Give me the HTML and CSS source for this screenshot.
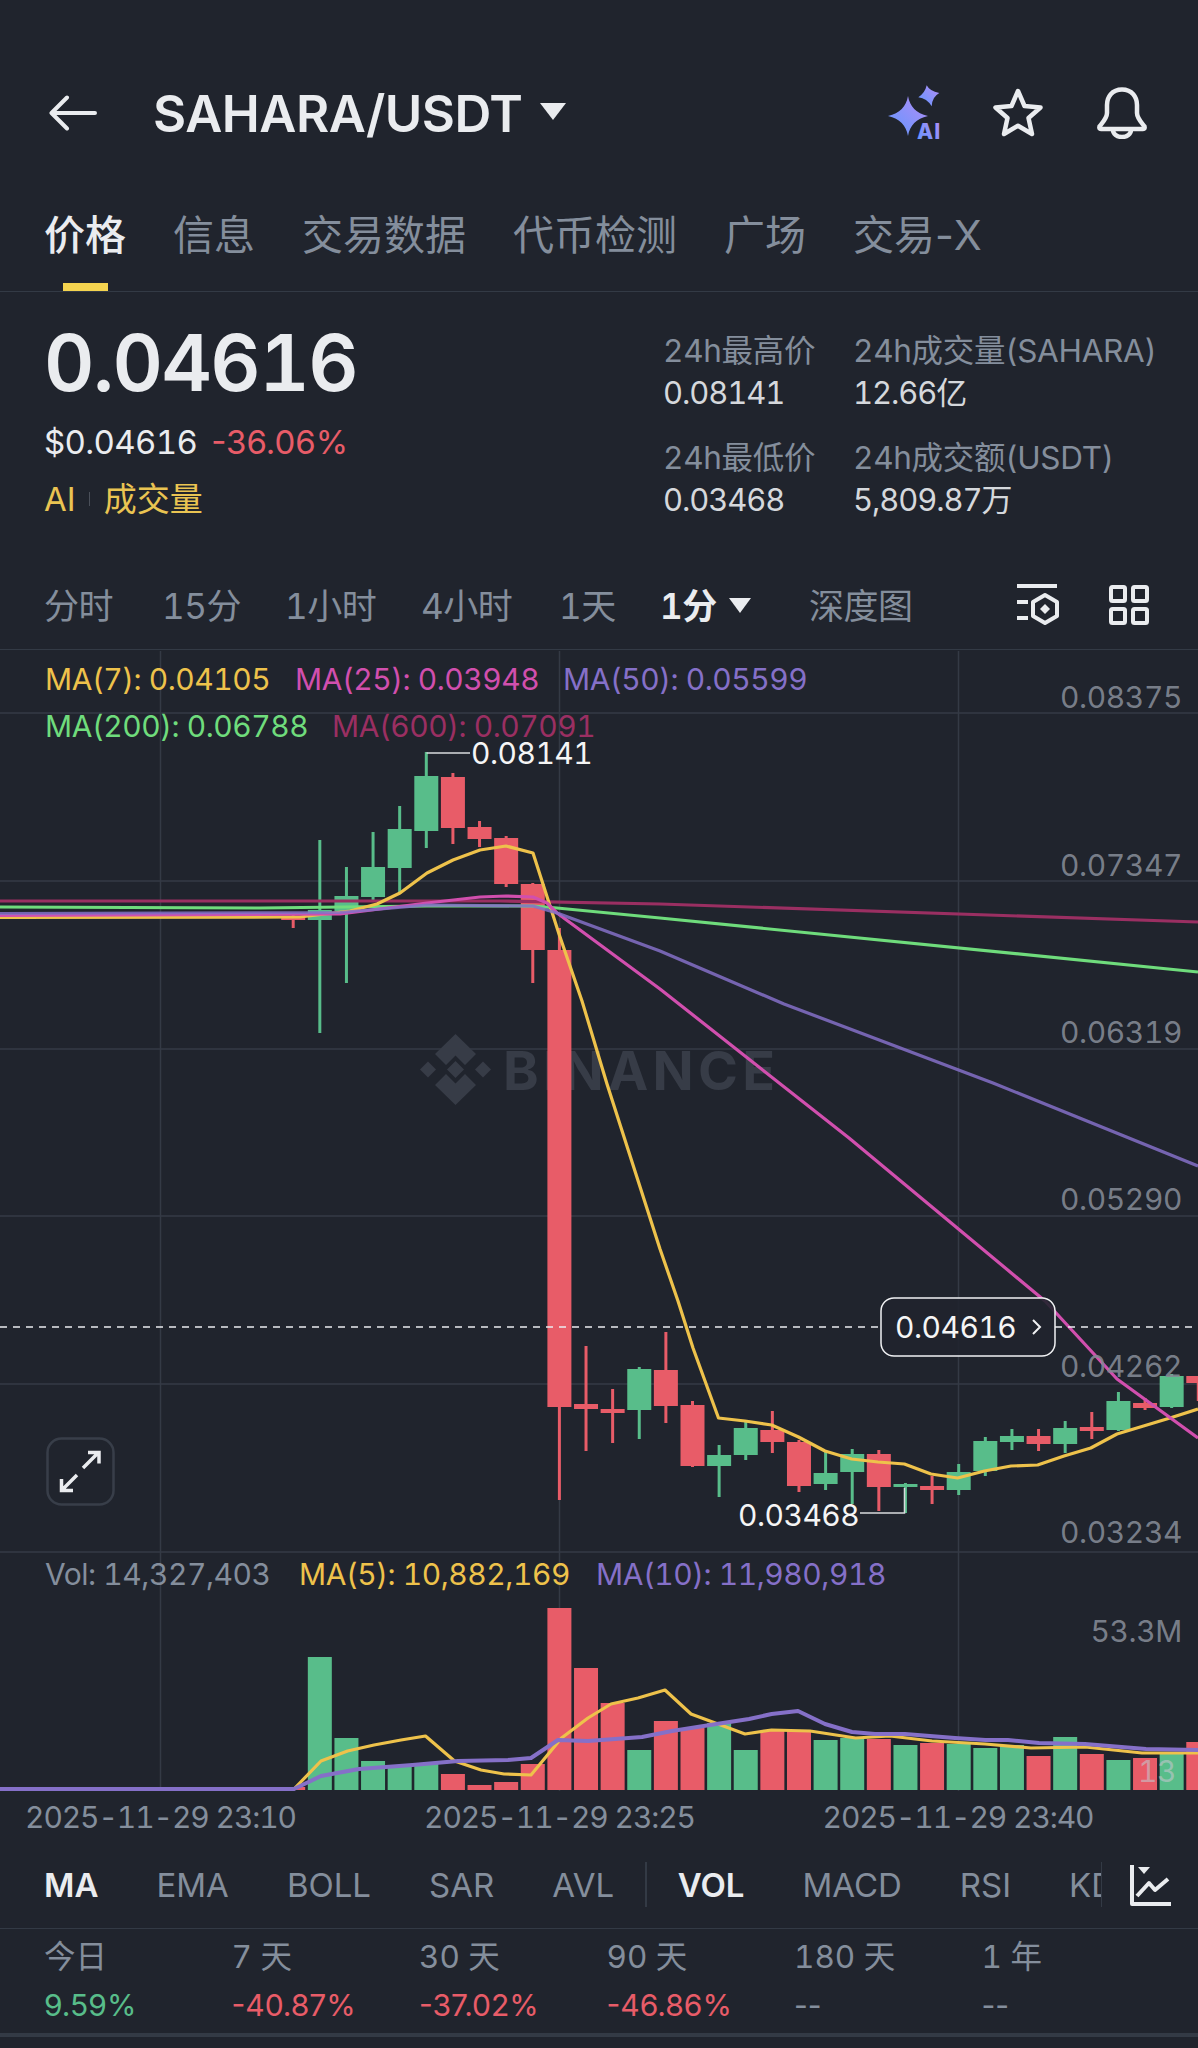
FILE: index.html
```html
<!DOCTYPE html>
<html lang="zh">
  <head>
    <meta charset="UTF-8" />
    <meta name="viewport" content="width=device-width, initial-scale=1.0" />
    <title>SAHARA/USDT</title>
    <link rel="stylesheet" href="styles.css">
  </head>
  <body>
    <header class="topbar">
      <svg class="icon-back" viewBox="0 0 48 36" width="48" height="36">
        <path d="M46 18H3M18 2.500 2.500 18 18 33.500" />
      </svg>
      <div class="pair">SAHARA/USDT</div>
      <span class="caret caret-big"></span>
      <svg class="icon-ai" viewBox="0 0 56 56" width="56" height="56">
        <defs>
          <linearGradient id="aiGrad" x1="0" y1="1" x2="1" y2="0">
            <stop offset="0" stop-color="#5f97ff" />
            <stop offset="1" stop-color="#b48cf5" />
          </linearGradient>
        </defs>
        <path fill="url(#aiGrad)" d="M20 11C22 22 28 28 40 31C28 34 22 40 20 51C18 40 12 34 0 31C12 28 18 22 20 11Z" />
        <path fill="url(#aiGrad)" d="M38.700 .3Q41.500 6 51.300 8Q44 12 43.700 21.300Q39 13.500 30.300 12.300Q37 8 38.700 .3Z" />
        <text class="ai-text" x="29" y="54">AI</text>
      </svg>
      <svg class="icon-star" viewBox="0 0 52 50" width="52" height="50">
        <path d="M26 3 32.500 18 48.500 19.500 36.500 30 40 46 26 37.700 12 46 15.500 30 3.500 19.500 19.500 18Z" />
      </svg>
      <svg class="icon-bell" viewBox="0 0 52 52" width="52" height="52">
        <path d="M26 2.500C16 2.500 11 10 11 18V26C11 31 7 35 3.500 39.500C3 41 3.500 42 5 42H47C48.500 42 49 41 48.500 39.500C45 35 41 31 41 26V18C41 10 36 2.500 26 2.500Z" />
        <path d="M17 42.500C17 47 21 50 26 50S35 47 35 42.500" />
      </svg>
    </header>

    <nav class="tabs">
      <a class="tab tab-on">价格</a>
      <a class="tab">信息</a>
      <a class="tab">交易数据</a>
      <a class="tab">代币检测</a>
      <a class="tab">广场</a>
      <a class="tab">交易-X</a>
    </nav>

    <section class="summary">
      <div class="summary-left">
        <div class="price">0.04616</div>
        <div class="price-sub">
          <span class="usd">$0.04616</span>
          <span class="down">-36.06%</span>
        </div>
        <div class="tags">
          <span>AI</span>
          <i class="tag-sep"></i>
          <span>成交量</span>
        </div>
      </div>
      <div class="stats">
        <div class="stat">
          <div class="stat-label">24h最高价</div>
          <div class="stat-value">0.08141</div>
        </div>
        <div class="stat">
          <div class="stat-label">24h成交量(SAHARA)</div>
          <div class="stat-value">12.66亿</div>
        </div>
        <div class="stat">
          <div class="stat-label">24h最低价</div>
          <div class="stat-value">0.03468</div>
        </div>
        <div class="stat">
          <div class="stat-label">24h成交额(USDT)</div>
          <div class="stat-value">5,809.87万</div>
        </div>
      </div>
    </section>

    <nav class="periods">
      <a class="period">分时</a>
      <a class="period">15分</a>
      <a class="period">1小时</a>
      <a class="period">4小时</a>
      <a class="period">1天</a>
      <a class="period period-on">1分</a>
      <span class="caret"></span>
      <a class="period">深度图</a>
      <svg class="icon-tool" viewBox="0 0 44 42" width="44" height="42">
        <path d="M2 2H42M2 18H13M2 34H13" />
        <path d="M30 11 42 18V32L30 39 18 32V18Z" />
        <path class="solid" d="M30 20 35 25 30 30 25 25Z" />
      </svg>
      <svg class="icon-grid" viewBox="0 0 40 40" width="40" height="40">
        <rect x="2" y="2" width="14" height="14" rx="1.500" />
        <rect x="24" y="2" width="14" height="14" rx="1.500" />
        <rect x="2" y="24" width="14" height="14" rx="1.500" />
        <rect x="24" y="24" width="14" height="14" rx="1.500" />
      </svg>
    </nav>

    <section class="chart-wrap">
      <svg class="chart" viewBox="0 649 1198 1191" width="1198" height="1191">
        <!-- grid -->
        <g class="grid">
          <path d="M0 712H1198M0 880H1198M0 1048H1198M0 1215H1198M0 1383H1198M0 1551H1198" />
          <path d="M160.500 650V1790M559.500 650V1790M958.500 650V1790" />
        </g>

        <!-- watermark -->
        <g class="mark">
          <path d="M455.500 1033 476 1053 465 1064 455.500 1054.500 446 1064 435 1053Z" />
          <path d="M455.500 1104 476 1084 465 1073 455.500 1082.500 446 1073 435 1084Z" />
          <path d="M455.500 1060 464 1068.500 455.500 1077 447 1068.500Z" />
          <path d="M428 1060.500 436 1068.500 428 1076.500 420 1068.500Z" />
          <path d="M483 1060.500 491 1068.500 483 1076.500 475 1068.500Z" />
          <text class="mark-text" x="503" y="1089">BINANCE</text>
        </g>

        <g id="volumes"></g>
        <polyline class="line ma-yellow" points="0,1788 294,1788 321,1760 347.600,1750 374,1744 401,1739 425.500,1735 454.500,1760 481,1769 504,1773 531,1774 561.500,1737 588,1717 611,1703 638,1697 665,1689 691,1713 718,1723 745,1733 771.600,1729 810,1730 855.600,1737 890,1735 932,1740 985,1743 1031,1747 1085,1746 1142,1752 1198,1752" />
        <polyline class="line ma-purple vol-base" points="0,1788 294,1788 321,1775 359,1768 412.500,1764 458,1760 508,1759 531,1757 558,1739 588,1740 642,1736 672,1730 710,1724 749,1718 771.600,1713 798,1710 825,1723 852,1731 875,1733 905,1733 955,1737 985.500,1739 1008,1739 1039,1742 1085,1743 1146,1748 1198,1749" />

        <g id="candles"></g>
        <polyline class="line ma-maroon" points="0,900 260,900 500,900 660,903 1198,921" />
        <polyline class="line ma-green" points="0,906 260,907 427,905 533,905 557,907 660,917 1198,971" />
        <polyline class="line ma-yellow" points="0,916.500 300,916 350,910 377,903 400,892 427,872 453,859 480,849 506,845 533,852 559,933 582,1000 607,1083 660,1248 678,1300 693,1347 718.500,1417 745,1420 771.700,1424 798.500,1436 825,1450 851.600,1458 878,1461 904.400,1463 931,1473 957.600,1477 984.400,1470 1011,1465 1037.600,1464 1064,1455 1090.800,1447 1117,1433 1143.500,1425 1170,1417 1198,1408" />
        <polyline class="line ma-pink" points="0,914.500 340,913 427,902 480,896 506,895 533,896 547,902 557,912 660,988 849,1137 1045,1300 1117,1378 1198,1437" />
        <polyline class="line ma-purple ma-flat" points="0,912.500 340,911.500 427,904 533,905 557,912 660,950 784,1003 993,1082 1198,1165" />

        <!-- high / low marks -->
        <path class="leader" d="M426.500 752H470M860 1512H904.500V1487" />
        <text class="val" x="471" y="763">0.08141</text>
        <text class="val" x="738" y="1525">0.03468</text>

        <!-- last price -->
        <path class="last" d="M0 1326H881M1055 1326H1198" />
        <rect class="tag" x="881" y="1297" width="174" height="58" rx="13" />
        <text class="val" x="895" y="1337">0.04616</text>
        <path class="chev" d="M1033 1319 1040 1326 1033 1333" />

        <!-- price axis -->
        <g class="axis">
          <text x="1182" y="707">0.08375</text>
          <text x="1182" y="875">0.07347</text>
          <text x="1182" y="1042">0.06319</text>
          <text x="1182" y="1209">0.05290</text>
          <text x="1182" y="1376">0.04262</text>
          <text x="1182" y="1542">0.03234</text>
          <text x="1182" y="1641">53.3M</text>
          <text class="axis-faint" x="1176" y="1781">13</text>
        </g>

        <!-- legends -->
        <g class="legend">
          <text class="c-yellow" x="45" y="689">MA(7): 0.04105</text>
          <text class="c-pink" x="295" y="689">MA(25): 0.03948</text>
          <text class="c-purple" x="563" y="689">MA(50): 0.05599</text>
          <text class="c-green" x="45" y="736">MA(200): 0.06788</text>
          <text class="c-maroon" x="332" y="736">MA(600): 0.07091</text>
          <text class="c-grey" x="45" y="1584">Vol: 14,327,403</text>
          <text class="c-yellow" x="299" y="1584">MA(5): 10,882,169</text>
          <text class="c-purple" x="596" y="1584">MA(10): 11,980,918</text>
        </g>

        <!-- expand button -->
        <rect class="expand-box" x="47.500" y="1437.500" width="66" height="66" rx="14" />
        <path class="expand" d="M83 1467 98 1452M88 1451.500H99V1462.500M77 1474 62 1489M61.500 1478V1489.500H73" />

        <!-- time axis -->
        <g class="times">
          <text x="160.500" y="1827">2025-11-29 23:10</text>
          <text x="559.500" y="1827">2025-11-29 23:25</text>
          <text x="958" y="1827">2025-11-29 23:40</text>
        </g>
      </svg>
    </section>

    <nav class="indicators">
      <div class="ind-scroll">
        <a class="ind ind-on">MA</a>
        <a class="ind">EMA</a>
        <a class="ind">BOLL</a>
        <a class="ind">SAR</a>
        <a class="ind">AVL</a>
        <i class="ind-sep"></i>
        <a class="ind ind-on">VOL</a>
        <a class="ind">MACD</a>
        <a class="ind">RSI</a>
        <a class="ind">KDJ</a>
      </div>
      <svg class="icon-ind" viewBox="0 0 42 44" width="42" height="44">
        <path class="solid" d="M8 4H20L14 11Z" />
        <path d="M2 2V41H41" />
        <path d="M7 33 19 20 25 27 38 16" />
      </svg>
    </nav>

    <section class="returns">
      <div class="ret"><div class="ret-label">今日</div><div class="ret-value up">9.59%</div></div>
      <div class="ret"><div class="ret-label">7 天</div><div class="ret-value down">-40.87%</div></div>
      <div class="ret"><div class="ret-label">30 天</div><div class="ret-value down">-37.02%</div></div>
      <div class="ret"><div class="ret-label">90 天</div><div class="ret-value down">-46.86%</div></div>
      <div class="ret"><div class="ret-label">180 天</div><div class="ret-value">--</div></div>
      <div class="ret"><div class="ret-label">1 年</div><div class="ret-value">--</div></div>
    </section>

    <script src="chart.js"></script>
  </body>
</html>
```

FILE: styles.css
```css
html,
body {
  margin: 0;
  padding: 0;
  background: #20242d;
  height: 2048px;
  overflow: hidden;
}

body {
  width: 1198px;
  font-family: Inter, "Noto Sans CJK SC", sans-serif;
  font-variant-numeric: tabular-nums;
  color: #eaecef;
}

a {
  display: block;
}

.topbar {
  display: flex;
  align-items: center;
  height: 50px;
  margin-top: 88px;
  padding: 0 50px 0 49px;
}

.icon-back {
  fill: none;
  stroke: #eaecef;
  stroke-width: 4;
  stroke-linecap: round;
  stroke-linejoin: round;
}

.pair {
  margin-left: 56px;
  font-size: 51px;
  font-weight: 600;
  letter-spacing: -0.5px;
}

.caret {
  width: 0;
  height: 0;
  border-left: 11px solid transparent;
  border-right: 11px solid transparent;
  border-top: 15px solid #eaecef;
}

.caret-big {
  margin-left: 18px;
  margin-top: -4px;
  border-left-width: 13px;
  border-right-width: 13px;
  border-top-width: 17px;
}

.icon-ai {
  margin-left: auto;
  overflow: visible;
}

.ai-text {
  font-size: 21px;
  font-weight: 800;
  letter-spacing: 1px;
  fill: url(#aiGrad);
}

.icon-star,
.icon-bell {
  fill: none;
  stroke: #eaecef;
  stroke-width: 4.500;
  stroke-linejoin: round;
  stroke-linecap: round;
}

.icon-star {
  margin-left: 48px;
}

.icon-bell {
  margin-left: 52px;
}

.tabs {
  display: flex;
  gap: 47px;
  height: 154px;
  box-sizing: border-box;
  padding: 72px 44px 0;
  border-bottom: 1px solid #333a45;
  font-variant-numeric: normal;
}

.tab {
  position: relative;
  height: 60px;
  font-size: 41px;
  line-height: 50px;
  color: #848e9c;
}

.tab-on {
  color: #eaecef;
  font-weight: 500;
}

.tab-on::after {
  content: "";
  position: absolute;
  left: 19px;
  bottom: -21px;
  width: 45px;
  height: 8px;
  background: #f5d44f;
}

.summary {
  display: flex;
  justify-content: space-between;
  height: 254px;
  padding: 31px 0 0 44px;
}

.price {
  font-size: 78px;
  line-height: 80px;
  font-weight: 600;
  letter-spacing: -1.500px;
}

.price-sub {
  display: flex;
  gap: 14px;
  margin-top: 18px;
  font-size: 33px;
  line-height: 42px;
}

.usd {
  letter-spacing: -0.650px;
}

.down {
  color: #e85c68;
  font-variant-numeric: normal;
}

.up {
  color: #58bd8a;
}

.tags {
  display: flex;
  align-items: center;
  margin-top: 15px;
  font-size: 33px;
  line-height: 42px;
  color: #eac452;
}

.tag-sep {
  width: 1px;
  height: 14px;
  margin: 0 14px 0 13px;
  background: #4a4f59;
}

.stats {
  display: grid;
  grid-template-columns: 190px 345px;
  grid-auto-rows: 107px;
  margin-top: 7px;
}

.stat-label {
  font-size: 31.500px;
  line-height: 42px;
  letter-spacing: -0.300px;
  color: #848e9c;
}

.stat-value {
  font-size: 31px;
  line-height: 42px;
  letter-spacing: -1.100px;
  color: #d5d8dc;
}

.periods {
  display: grid;
  grid-template-columns: 118px 123px 136px 138px 101px 69px 80px 206px 94px 40px;
  align-items: center;
  height: 56px;
  padding-left: 44px;
  font-size: 35px;
  letter-spacing: -0.500px;
  color: #848e9c;
}

.period {
  margin-top: -3px;
}

.period-on {
  color: #eaecef;
  font-weight: 600;
}

.icon-tool,
.icon-ind {
  fill: none;
  stroke: #eaecef;
  stroke-width: 4;
  stroke-linejoin: round;
}

.solid {
  fill: #eaecef;
  stroke: none;
}

.icon-grid {
  fill: none;
  stroke: #eaecef;
  stroke-width: 4;
}

.chart-wrap {
  margin-top: 16px;
  border-top: 1px solid #333a45;
  height: 1191px;
}

.chart {
  display: block;
}

.grid path {
  stroke: #343a45;
  stroke-width: 1.500;
  fill: none;
}

.mark path {
  fill: #373c47;
}

.mark-text {
  font-size: 54px;
  font-weight: 700;
  letter-spacing: 4.300px;
  fill: #373c47;
}

.bar-red {
  fill: #e85c68;
}

.bar-green {
  fill: #58bd8a;
}

.wick-red {
  stroke: #e85c68;
  stroke-width: 3;
}

.wick-green {
  stroke: #58bd8a;
  stroke-width: 3;
}

.line {
  fill: none;
  stroke-width: 3.200;
  stroke-linejoin: round;
}

.ma-yellow {
  stroke: #eec24b;
}

.ma-purple {
  stroke: #8570c8;
}

.ma-flat {
  stroke-opacity: 0.85;
}

.ma-pink {
  stroke: #d14fae;
}

.ma-green {
  stroke: #6fdc7c;
}

.ma-maroon {
  stroke: #9a2f62;
}

.vol-base {
  stroke-width: 4;
}

.leader {
  fill: none;
  stroke: #d8dadd;
  stroke-width: 1.500;
}

.val {
  font-size: 30px;
  letter-spacing: -0.500px;
  fill: #f5f5f5;
}

.last {
  stroke: #eaecef;
  stroke-width: 1.500;
  stroke-dasharray: 7 6;
}

.tag {
  fill: #20242d;
  fill-opacity: 0.9;
  stroke: #f0f1f3;
  stroke-width: 1.500;
}

.chev {
  fill: none;
  stroke: #f0f1f3;
  stroke-width: 2;
}

.axis text {
  font-size: 30px;
  letter-spacing: -0.400px;
  fill: #848a95;
  fill-opacity: 0.9;
  text-anchor: end;
}

.axis .axis-faint {
  fill: #c3c6cc;
  fill-opacity: 0.6;
}

.legend text {
  font-size: 30px;
  letter-spacing: -0.450px;
}

.c-yellow {
  fill: #eec24b;
}

.c-pink {
  fill: #d14fae;
}

.c-purple {
  fill: #8570c8;
}

.c-green {
  fill: #6fdc7c;
}

.c-maroon {
  fill: #9a2f62;
}

.c-grey {
  fill: #848e9c;
}

.expand-box {
  fill: #20242d;
  stroke: #383e49;
  stroke-width: 2.500;
}

.expand {
  fill: none;
  stroke: #eaecef;
  stroke-width: 3.500;
}

.times text {
  font-size: 30px;
  letter-spacing: -1.100px;
  fill: #848e9c;
  text-anchor: middle;
}

.indicators {
  display: flex;
  align-items: center;
  height: 87px;
  padding-left: 44px;
  border-bottom: 1.500px solid #333a45;
}

.ind-scroll {
  display: flex;
  align-items: center;
  gap: 58px;
  width: 1057px;
  height: 45px;
  overflow: hidden;
  border-right: 1.500px solid #333a45;
  font-size: 33px;
  color: #848e9c;
}

.ind {
  flex-shrink: 0;
}

.ind-on {
  color: #eaecef;
  font-weight: 600;
}

.ind-sep {
  flex-shrink: 0;
  width: 1.500px;
  height: 45px;
  margin: 0 -27px;
  background: #333a45;
}

.icon-ind {
  margin-left: 28px;
}

.returns {
  display: grid;
  grid-template-columns: repeat(6, 187.500px);
  height: 108px;
  box-sizing: border-box;
  padding: 6px 0 0 44px;
  border-bottom: 4px solid #333a45;
}

.ret-label {
  font-size: 31.500px;
  line-height: 44px;
  color: #848e9c;
}

.ret-value {
  margin-top: 4px;
  font-size: 30px;
  line-height: 44px;
  font-variant-numeric: normal;
  color: #848e9c;
}

.ret-value.up {
  color: #58bd8a;
}

.ret-value.down {
  color: #e85c68;
}
```

FILE: chart.js
```js
const NS = "http://www.w3.org/2000/svg";
const STEP = 26.62;
const X0 = 559.4; // centre of the big red candle
const BODY = 24;

// index from X0, body top and bottom, wick top and bottom, up?
const candles = [
  [-17, 915.5, 917, 915.5, 917, 0],
  [-15, 915.5, 917, 915.5, 917, 0],
  [-12, 915.5, 917, 915.5, 917, 0],
  [-10, 916, 919, 914, 927, 0],
  [-9, 909, 919, 839, 1032, 1],
  [-8, 895, 910, 866, 982, 1],
  [-7, 866, 896, 831, 900, 1],
  [-6, 828, 867, 805, 893, 1],
  [-5, 775, 830, 751, 847, 1],
  [-4, 776, 827, 772, 843, 0],
  [-3, 826, 838, 820, 846, 0],
  [-2, 837, 883, 835, 886, 0],
  [-1, 883, 949, 882, 982, 0],
  [0, 949, 1406, 927, 1499, 0],
  [1, 1403, 1408, 1345, 1450, 0],
  [2, 1408, 1412, 1388, 1442, 0],
  [3, 1368, 1409, 1366, 1438, 1],
  [4, 1369, 1405, 1331, 1422, 0],
  [5, 1404, 1465, 1400, 1466, 0],
  [6, 1454, 1465, 1444, 1496, 1],
  [7, 1427, 1454, 1419, 1459, 1],
  [8, 1429, 1441, 1410, 1452, 0],
  [9, 1441, 1485, 1439, 1491, 0],
  [10, 1472, 1483, 1450, 1489, 1],
  [11, 1453, 1471, 1448, 1503, 1],
  [12, 1453, 1486, 1449, 1510, 0],
  [13, 1483, 1486, 1482, 1512, 1],
  [14, 1485, 1489, 1475, 1503, 0],
  [15, 1471, 1489, 1463, 1494, 1],
  [16, 1440, 1470, 1436, 1475, 1],
  [17, 1435, 1441, 1428, 1449, 1],
  [18, 1435, 1443, 1428, 1450, 0],
  [19, 1427, 1443, 1420, 1452, 1],
  [20, 1426, 1430, 1411, 1438, 0],
  [21, 1400, 1429, 1391, 1430, 1],
  [22, 1402, 1407, 1397, 1409, 0],
  [23, 1375, 1406, 1373, 1407, 1],
  [24, 1375, 1382, 1375, 1400, 0],
];

// index from X0, top of bar, up?
const volumes = [
  [-10, 1786, 0], [-9, 1656, 1], [-8, 1737, 1], [-7, 1760, 1], [-6, 1766, 1],
  [-5, 1763, 1], [-4, 1773, 0], [-3, 1784, 0], [-2, 1781, 0], [-1, 1763, 0],
  [0, 1607, 0], [1, 1667, 0], [2, 1702, 0], [3, 1749, 1], [4, 1720, 0],
  [5, 1727, 0], [6, 1722, 1], [7, 1749, 1], [8, 1730, 0], [9, 1729, 0],
  [10, 1739, 1], [11, 1737, 1], [12, 1738, 0], [13, 1744, 1], [14, 1742, 0],
  [15, 1743, 1], [16, 1747, 1], [17, 1744, 1], [18, 1755, 0], [19, 1736, 1],
  [20, 1753, 0], [21, 1759, 1], [22, 1757, 0], [23, 1752, 1], [24, 1741, 0],
];

function add(parent, tag, attrs) {
  const el = document.createElementNS(NS, tag);
  for (const k in attrs) el.setAttribute(k, attrs[k]);
  parent.appendChild(el);
}

const candleGroup = document.getElementById("candles");
candles.forEach(([i, top, bottom, high, low, up]) => {
  const x = X0 + i * STEP;
  const kind = up ? "green" : "red";
  add(candleGroup, "line", { x1: x, x2: x, y1: high, y2: low, class: "wick-" + kind });
  add(candleGroup, "rect", { x: x - BODY / 2, y: top, width: BODY, height: bottom - top, class: "bar-" + kind });
});

const volumeGroup = document.getElementById("volumes");
volumes.forEach(([i, top, up]) => {
  const x = X0 + i * STEP;
  add(volumeGroup, "rect", { x: x - BODY / 2, y: top, width: BODY, height: 1789 - top, class: up ? "bar-green" : "bar-red" });
});
```
